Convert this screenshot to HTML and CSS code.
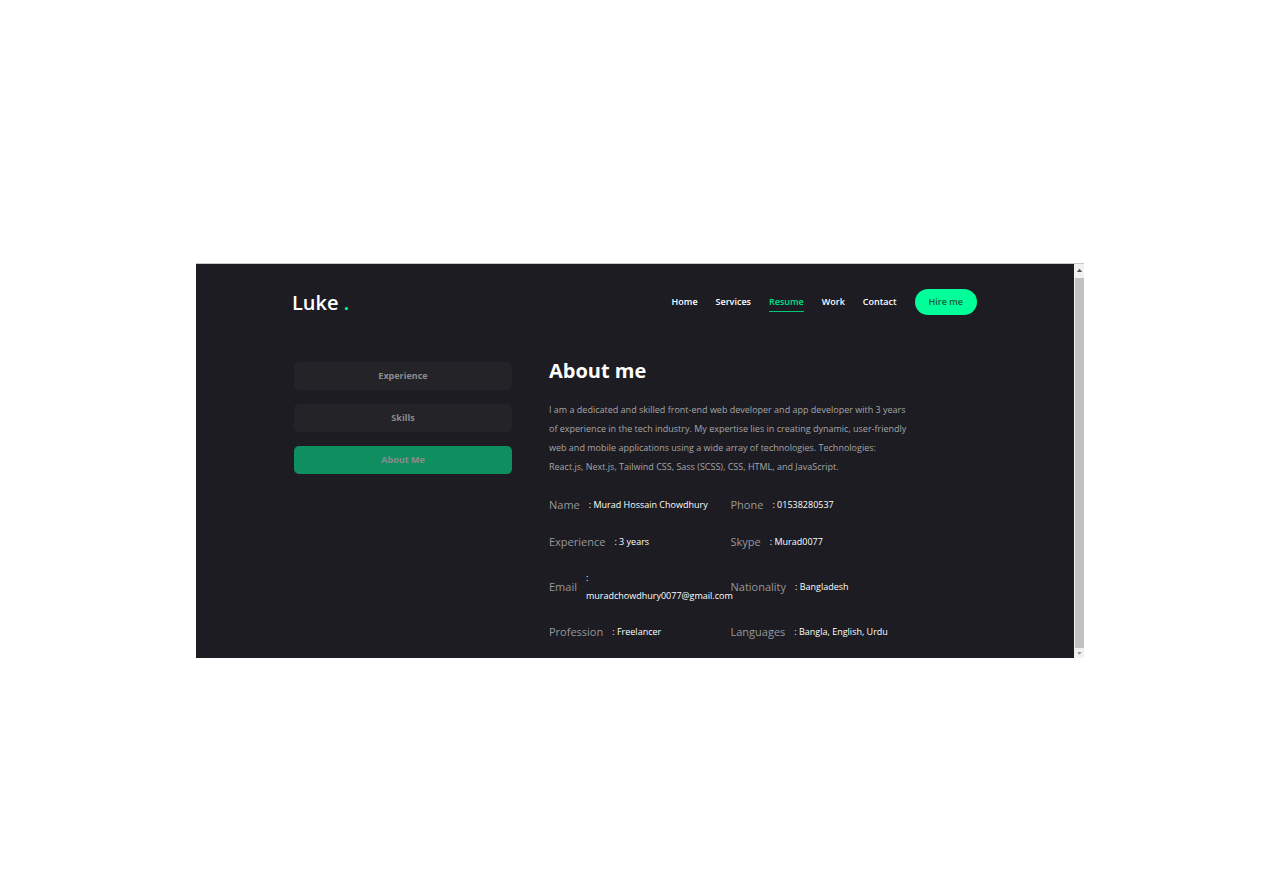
FILE: index.html
```html
<!DOCTYPE html>
<html lang="en">
<head>
<meta charset="utf-8">
<title>Luke - Resume</title>
<link rel="stylesheet" href="styles.css">
</head>
<body>
<div class="window">
  <div class="page">
    <header class="header">
      <a class="logo" href="#">Luke <span class="logo-dot">.</span></a>
      <nav class="nav">
        <a class="nav-link" href="#">Home</a>
        <a class="nav-link" href="#">Services</a>
        <a class="nav-link nav-active" href="#">Resume</a>
        <a class="nav-link" href="#">Work</a>
        <a class="nav-link" href="#">Contact</a>
        <button class="hire" type="button">Hire me</button>
      </nav>
    </header>
    <main class="content">
      <div class="tabs">
        <button class="tab" type="button">Experience</button>
        <button class="tab" type="button">Skills</button>
        <button class="tab tab-active" type="button">About Me</button>
      </div>
      <section class="about">
        <h1 class="title">About me</h1>
        <p class="bio">I am a dedicated and skilled front-end web developer and app developer with 3 years<br>of experience in the tech industry. My expertise lies in creating dynamic, user-friendly<br>web and mobile applications using a wide array of technologies. Technologies:<br>React.js, Next.js, Tailwind CSS, Sass (SCSS), CSS, HTML, and JavaScript.</p>
        <dl class="facts">
          <div class="fact"><dt>Name</dt><dd>: Murad Hossain Chowdhury</dd></div>
          <div class="fact"><dt>Phone</dt><dd>: 01538280537</dd></div>
          <div class="fact"><dt>Experience</dt><dd>: 3 years</dd></div>
          <div class="fact"><dt>Skype</dt><dd>: Murad0077</dd></div>
          <div class="fact"><dt>Email</dt><dd>:<br>muradchowdhury0077@gmail.com</dd></div>
          <div class="fact"><dt>Nationality</dt><dd>: Bangladesh</dd></div>
          <div class="fact"><dt>Profession</dt><dd>: Freelancer</dd></div>
          <div class="fact"><dt>Languages</dt><dd>: Bangla, English, Urdu</dd></div>
        </dl>
      </section>
    </main>
  </div>
  <div class="scrollbar">
    <svg class="arrow" viewBox="0 0 10 14"><path d="M2 8 L5 4.500 L8 8 Z" fill="#555"/></svg>
    <div class="thumb"></div>
    <svg class="arrow arrow-end" viewBox="0 0 10 10"><path d="M2.500 4 L7.500 4 L5 7 Z" fill="#999"/></svg>
  </div>
</div>
</body>
</html>
```
FILE: styles.css
```css
* { box-sizing: border-box; }
body {
  margin: 0;
  padding: 264px 16px 0;
  background: #fff;
  font-family: "Open Sans", "Noto Sans", sans-serif;
  font-size: 9px;
  line-height: 19px;
  color: #fff;
}
a { color: inherit; text-decoration: none; }
button { font: inherit; line-height: 18px; border: 0; cursor: pointer; }
.window {
  display: flex;
  max-width: 888px;
  margin: 0 auto;
  box-shadow: 0 -1px 0 #c4cac8;
}
.page {
  flex: 1;
  padding: 25px 97px 16px 96px;
  background: #1c1c22;
}
.header {
  display: flex;
  align-items: center;
  justify-content: space-between;
  height: 26px;
}
.logo { padding-top: 2px; font-size: 20px; line-height: 26px; font-weight: 600; }
.logo-dot { color: #00ff99; }
.nav { display: flex; align-items: center; gap: 18px; font-weight: 600; }
.nav-link { border-bottom: 1px solid transparent; }
.nav-active { color: #00e187; border-color: #00c87b; }
.hire {
  height: 26px;
  padding: 0 14px 1px;
  border-radius: 13px;
  background: #00ff99;
  color: #1c5c44;
  font-weight: 600;
}
.content {
  display: grid;
  grid-template-columns: 218px 363px;
  gap: 37px;
  padding: 41px 2px 0;
}
.tabs { display: flex; flex-direction: column; gap: 14px; padding-top: 6px; }
.tab {
  height: 28px;
  padding: 0 0 1px;
  border-radius: 5px;
  background: #232328;
  color: #8b8b8e;
  font-weight: 700;
}
.tab-active { background: #0f8f60; }
.title { margin: 0; font-size: 20px; line-height: 30px; font-weight: 700; }
.bio { margin: 14px 0 19px; color: #a5a5a8; white-space: nowrap; }
.facts {
  display: grid;
  grid-template-columns: 1fr 1fr;
  row-gap: 17px;
  margin: 0;
}
.fact { display: flex; align-items: center; gap: 9px; min-width: 0; }
.fact dt { font-size: 11px; line-height: 20px; color: #98989b; }
.fact dd { margin: 0; line-height: 18px; white-space: nowrap; font-weight: 500; }
.scrollbar {
  display: flex;
  flex-direction: column;
  width: 10px;
  padding-left: 1px;
  background: #f1f1f1;
}
.arrow { display: block; width: 9px; height: 14px; }
.arrow-end { height: 10px; }
.thumb { flex: 1; background: #c1c1c1; }
```
